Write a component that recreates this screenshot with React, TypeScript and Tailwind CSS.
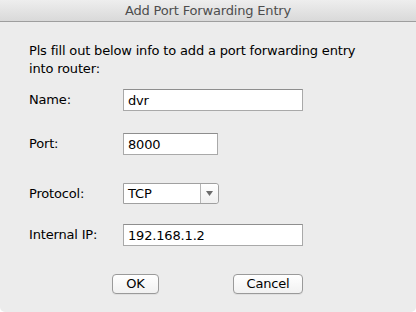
export default function App() {
  return (
    <div className="w-[416px] h-[312px] bg-white" style={{ fontFamily: '"DejaVu Sans", "Liberation Sans", sans-serif' }}>
      <div className="flex flex-col w-full h-full bg-[#ececec] rounded-b-[5px] overflow-hidden tracking-[-0.17px]">
        {/* title bar */}
        <div className="h-[22px] flex items-center justify-center bg-gradient-to-b from-[#eeeeee] to-[#d9d9d9] border-b border-[#9e9e9e] text-[13px] text-[#4d4d4d] shrink-0">
          Add Port Forwarding Entry
        </div>

        <div className="pl-[29px] pt-[20px] text-[13px] leading-[18px] text-black">
          <p className="w-[340px]">Pls fill out below info to add a port forwarding entry into router:</p>

          <div className="mt-[11px] flex items-center h-[22px]">
            <span className="w-[94px]">Name:</span>
            <input
              readOnly
              value="dvr"
              className="w-[180px] h-[22px] bg-white border border-[#a9a9a9] border-t-[#8e8e8e] px-[4px] text-[13px] outline-none"
            />
          </div>

          <div className="mt-[22px] flex items-center h-[22px]">
            <span className="w-[94px]">Port:</span>
            <input
              readOnly
              value="8000"
              className="w-[95px] h-[22px] bg-white border border-[#a9a9a9] border-t-[#8e8e8e] px-[4px] text-[13px] outline-none"
            />
          </div>

          <div className="mt-[28px] flex items-center h-[21px]">
            <span className="w-[94px]">Protocol:</span>
            <div className="w-[96px] h-[21px] flex bg-white border border-[#a0a0a0] rounded-r-[3px]">
              <span className="flex-1 pl-[4px] leading-[19px]">TCP</span>
              <div className="w-[18px] border-l border-[#b5b5b5] bg-gradient-to-b from-[#ffffff] to-[#f0f0f0] rounded-r-[3px] flex items-center justify-center">
                <svg width="7" height="5" viewBox="0 0 7 5">
                  <path d="M0 0 L7 0 L3.5 5 Z" fill="#6b6b6b" />
                </svg>
              </div>
            </div>
          </div>

          <div className="mt-[20px] flex items-center h-[22px]">
            <span className="w-[94px]">Internal IP:</span>
            <input
              readOnly
              value="192.168.1.2"
              className="w-[180px] h-[22px] bg-white border border-[#a9a9a9] border-t-[#8e8e8e] px-[4px] text-[13px] outline-none"
            />
          </div>

          <div className="mt-[28px] flex">
            <button className="ml-[83px] w-[47px] h-[20px] bg-gradient-to-b from-white to-[#f1f1f1] border border-[#9a9a9a] rounded-[4px] text-[13px] leading-[18px] shadow-[0_1px_0_rgba(0,0,0,0.05)]">
              OK
            </button>
            <button className="ml-[74px] w-[70px] h-[20px] bg-gradient-to-b from-white to-[#f1f1f1] border border-[#9a9a9a] rounded-[4px] text-[13px] leading-[18px] shadow-[0_1px_0_rgba(0,0,0,0.05)]">
              Cancel
            </button>
          </div>
        </div>
      </div>
    </div>
  );
}
